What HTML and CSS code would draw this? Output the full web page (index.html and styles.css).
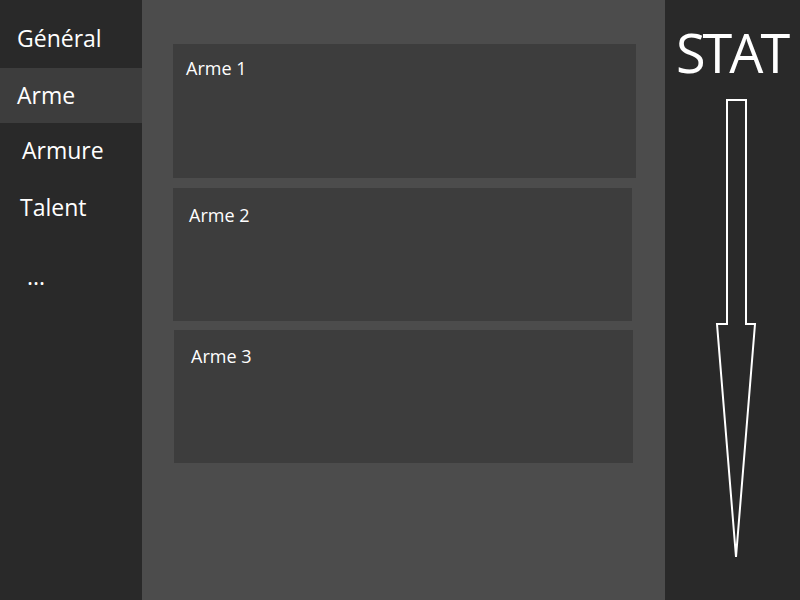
FILE: index.html
```html
<!DOCTYPE html>
<html lang="fr">
<head>
<meta charset="utf-8">
<title>Arme</title>
<link rel="stylesheet" href="styles.css">
</head>
<body>
<div class="app">
  <nav class="sidebar">
    <div class="nav-item nav-general">Général</div>
    <div class="nav-item nav-arme active">Arme</div>
    <div class="nav-item nav-armure">Armure</div>
    <div class="nav-item nav-talent">Talent</div>
    <div class="nav-item nav-more">...</div>
  </nav>
  <main class="main">
    <section class="card card-1"><span class="card-title">Arme 1</span></section>
    <section class="card card-2"><span class="card-title">Arme 2</span></section>
    <section class="card card-3"><span class="card-title">Arme 3</span></section>
  </main>
  <aside class="stat">
    <div class="stat-title">STAT</div>
    <svg class="stat-arrow" width="44" height="462" viewBox="0 0 44 462">
      <polygon points="12,2 31,2 31,226 40,226 21,459 2,226 12,226" fill="none" stroke="#ffffff" stroke-width="2" stroke-linejoin="miter"/>
    </svg>
  </aside>
</div>
</body>
</html>
```

FILE: styles.css
```css
html, body {
  margin: 0;
  padding: 0;
  width: 800px;
  height: 600px;
  overflow: hidden;
  font-family: "Open Sans", "Noto Sans", sans-serif;
  color: #ffffff;
}

.app {
  display: flex;
  width: 800px;
  height: 600px;
}

.sidebar {
  width: 142px;
  flex: none;
  background: #292929;
  padding-top: 11px;
  box-sizing: border-box;
  display: flex;
  flex-direction: column;
}

.nav-item {
  height: 55px;
  line-height: 55px;
  font-size: 23px;
  white-space: nowrap;
}

.nav-general { padding-left: 17px; margin-bottom: 2px; }
.nav-arme { padding-left: 17px; }
.nav-armure { padding-left: 22px; }
.nav-talent { padding-left: 20px; margin-top: 2px; }
.nav-more { padding-left: 27px; margin-top: 14px; }

.nav-item.active {
  background: #3d3d3d;
}

.main {
  width: 523px;
  flex: none;
  background: #4c4c4c;
  padding-top: 44px;
  box-sizing: border-box;
  display: flex;
  flex-direction: column;
}

.card {
  background: #3d3d3d;
  height: 133px;
  box-sizing: border-box;
}

.card-title {
  display: block;
  font-size: 18px;
  line-height: 18px;
}

.card-1 {
  margin-left: 31px;
  width: 463px;
  height: 134px;
  padding: 15px 0 0 13px;
}

.card-2 {
  margin-left: 31px;
  margin-top: 10px;
  width: 459px;
  padding: 18px 0 0 16px;
}

.card-3 {
  margin-left: 32px;
  margin-top: 9px;
  width: 459px;
  padding: 17px 0 0 17px;
}

.stat {
  flex: 1;
  background: #292929;
  padding: 25px 0 0 11px;
  box-sizing: border-box;
}

.stat-title {
  font-size: 54px;
  line-height: 54px;
  letter-spacing: -3px;
  white-space: nowrap;
}

.stat-arrow {
  display: block;
  margin: 19px 0 0 39px;
}
```
